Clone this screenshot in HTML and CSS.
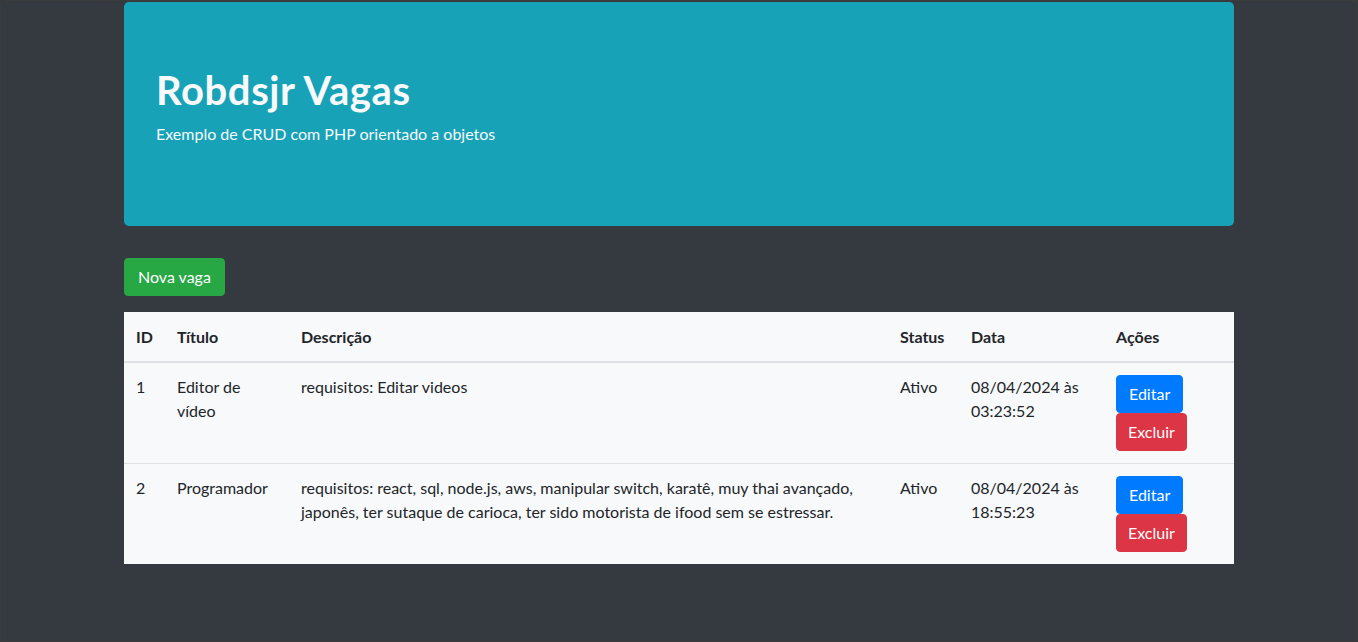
FILE: index.html
```html
<!DOCTYPE html>
<html lang="pt-br">
<head>
<meta charset="utf-8">
<title>Robdsjr Vagas</title>
<link rel="stylesheet" href="styles.css">
</head>
<body>
<div class="container">
  <header class="jumbotron">
    <h1>Robdsjr Vagas</h1>
    <p>Exemplo de CRUD com PHP orientado a objetos</p>
  </header>
  <main>
    <section>
      <a class="btn btn-success" href="#">Nova vaga</a>
    </section>
    <section class="mt-3">
      <table class="table">
        <thead>
          <tr>
            <th class="c-id">ID</th>
            <th class="c-title">Título</th>
            <th class="c-desc">Descrição</th>
            <th class="c-status">Status</th>
            <th class="c-date">Data</th>
            <th class="c-actions">Ações</th>
          </tr>
        </thead>
        <tbody>
          <tr>
            <td>1</td>
            <td>Editor de vídeo</td>
            <td>requisitos: Editar videos</td>
            <td>Ativo</td>
            <td>08/04/2024 às 03:23:52</td>
            <td>
              <div class="actions">
                <a class="btn btn-primary" href="#">Editar</a>
                <a class="btn btn-danger" href="#">Excluir</a>
              </div>
            </td>
          </tr>
          <tr>
            <td>2</td>
            <td>Programador</td>
            <td>requisitos: react, sql, node.js, aws, manipular switch, karatê, muy thai avançado, japonês, ter sutaque de carioca, ter sido motorista de ifood sem se estressar.</td>
            <td>Ativo</td>
            <td>08/04/2024 às 18:55:23</td>
            <td>
              <div class="actions">
                <a class="btn btn-primary" href="#">Editar</a>
                <a class="btn btn-danger" href="#">Excluir</a>
              </div>
            </td>
          </tr>
        </tbody>
      </table>
    </section>
  </main>
</div>
</body>
</html>
```

FILE: styles.css
```css
* { box-sizing: border-box; }

html, body { height: 100%; }

body {
  margin: 0;
  padding-top: 1px;
  background: #343a40;
  border: 1px solid #3c3c3c;
  border-top-left-radius: 6px;
  font-family: "Lato", "Noto Sans", sans-serif;
  font-size: 16px;
  line-height: 1.5;
  color: #212529;
}

.container {
  width: 1110px;
  margin: 0 auto;
}

.jumbotron {
  background: #17a2b8;
  color: #f8f9fa;
  padding: 64px 32px;
  margin-bottom: 32px;
  border-radius: 4.8px;
}

.jumbotron h1 {
  margin: 0 0 8px;
  font-size: 40px;
  font-weight: 700;
  line-height: 1.2;
  letter-spacing: 0.6px;
}

.jumbotron p {
  margin: 0 0 16px;
}

.btn {
  display: inline-block;
  padding: 6px 12px;
  font-size: 16px;
  line-height: 1.5;
  border: 1px solid transparent;
  border-radius: 4px;
  color: #fff;
  text-decoration: none;
}

.btn-success { background: #28a745; border-color: #28a745; padding: 6px 13px; }
.btn-primary { background: #007bff; border-color: #007bff; }
.btn-danger { background: #dc3545; border-color: #dc3545; padding: 6px 11px; }

.mt-3 { margin-top: 16px; }

.table {
  width: 100%;
  border-collapse: collapse;
  table-layout: fixed;
  background: #f8f9fa;
  color: #212529;
}

.table th,
.table td {
  padding: 12px;
  text-align: left;
  vertical-align: top;
  border-top: 1px solid #dee2e6;
}

.table th {
  font-weight: 700;
  vertical-align: bottom;
  border-top-color: #f8f9fa;
  border-bottom: 2px solid #dee2e6;
}

.c-id { width: 41px; }
.c-title { width: 124px; }
.c-desc { width: 599px; }
.c-status { width: 71px; }
.c-date { width: 145px; }
.c-actions { width: 130px; }

.actions {
  display: flex;
  flex-direction: column;
  align-items: flex-start;
}
```
